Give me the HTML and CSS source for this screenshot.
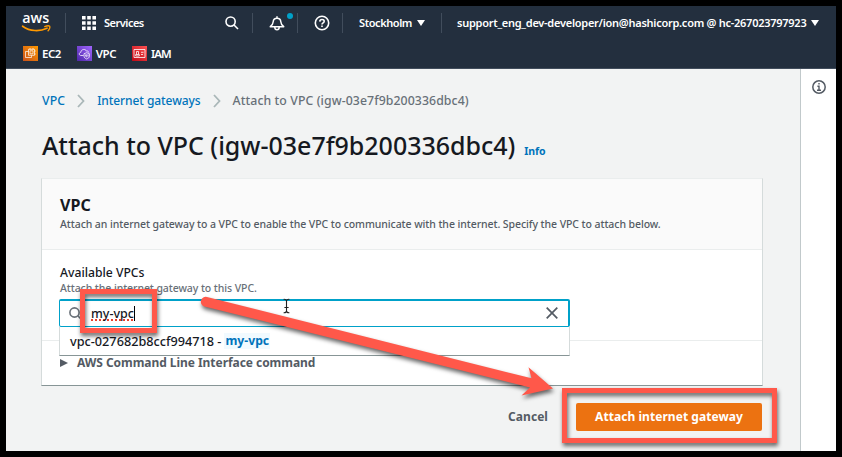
FILE: index.html
```html
<!DOCTYPE html>
<html lang="en">
<head>
<meta charset="utf-8">
<title>Attach to VPC</title>
<link rel="stylesheet" href="styles.css">
</head>
<body>
<div class="window">
  <header class="topnav">
    <div class="nav-row">
      <svg class="logo" width="30" height="20" viewBox="0 0 30 20">
        <text class="logo-text" x="0.3" y="9.3" textLength="27" lengthAdjust="spacingAndGlyphs">aws</text>
        <path d="M.6 12.2C8 17.6 18 17.6 25 14.2" fill="none" stroke="#ff9900" stroke-width="1.7" stroke-linecap="round"/>
        <path d="M22.8 12.6c2-.9 4.300-.9 4.900-.3.500.7-.2 3.100-1.600 4.500" fill="none" stroke="#ff9900" stroke-width="1.400" stroke-linecap="round"/>
      </svg>
      <i class="rule rule-logo"></i>
      <svg class="grid-icon" width="14" height="14" viewBox="0 0 14 14" fill="#fff">
        <path d="M0 0h3.600v3.600H0zM5.200 0h3.600v3.600H5.200zM10.400 0H14v3.600h-3.600zM0 5.200h3.600v3.600H0zM5.200 5.200h3.600v3.600H5.200zM10.400 5.200H14v3.600h-3.600zM0 10.400h3.600V14H0zM5.200 10.400h3.600V14H5.200zM10.400 10.400H14V14h-3.600z"/>
      </svg>
      <span class="nav-text services">Services</span>
      <svg class="nav-search" width="14" height="14" viewBox="0 0 14 14" fill="none" stroke="#fff" stroke-width="1.600">
        <circle cx="5.600" cy="5.600" r="4.600"/><path d="M9 9l4 4"/>
      </svg>
      <i class="rule rule-a"></i>
      <span class="bell">
        <svg width="16" height="15" viewBox="0 0 16 15" fill="none" stroke="#fff" stroke-width="1.500" stroke-linejoin="round">
          <path d="M8 .3v1.700M1.300 10.700h13.400c-2-1.500-2.700-2.700-2.900-5C11.600 3.400 10 2.200 8 2.200S4.400 3.400 4.200 5.700c-.2 2.300-.9 3.500-2.900 5zM5.700 11c.2 3.800 4.400 3.800 4.600 0"/>
        </svg>
        <i class="dot"></i>
      </span>
      <i class="rule rule-b"></i>
      <svg class="help" width="16" height="16" viewBox="0 0 16 16" fill="none" stroke="#fff" stroke-width="1.600">
        <circle cx="8" cy="8" r="6.700"/><path d="M5.800 6.600C5.900 3.700 10.200 4 10.200 6.300 10.200 7.900 8 7.700 8 9.500M8 10.500v1.500"/>
      </svg>
      <i class="rule rule-c"></i>
      <span class="nav-text region">Stockholm</span><i class="caret"></i>
      <i class="rule rule-d"></i>
      <span class="nav-text account">support_eng_dev-developer/ion@hashicorp.com @ hc-267023797923</span><i class="caret"></i>
    </div>
    <nav class="fav-row">
      <svg class="tile ec2" width="15" height="15" viewBox="0 0 15 15" fill="none" stroke="#fff" stroke-width=".7">
        <path d="M5.500 3.300h6v6h-6zM5.500 5.500h-3v6h6v-2.200M7 4.800h3v3H7zM7 2v1.300M10 2v1.300M12.800 5h-1.300M12.800 8h-1.300"/>
      </svg>
      <span class="fav-text">EC2</span>
      <svg class="tile vpc" width="15" height="15" viewBox="0 0 15 15" fill="none" stroke="#fff" stroke-width=".75">
        <path d="M6.500 9.500H3.800C1.700 9.300 1.800 6.500 3.900 6.300 4 3 8.600 2.500 9.400 5.100c1.500-.5 2.200.4 2.300 1.400M9.700 6.700l2.700 1v2.500c0 1.400-1.200 2.100-2.700 2.800C8.200 12.300 7 11.600 7 10.200V7.700zM9.700 8.300v3M8.400 8.500v2M11 8.500v2"/>
      </svg>
      <span class="fav-text fav-vpc">VPC</span>
      <svg class="tile iam" width="15" height="15" viewBox="0 0 15 15" fill="none" stroke="#fff" stroke-width=".8">
        <path d="M2 3.500h11v8H2zM3.700 10V8.500h3.600V10zM4.500 8.300V5.500h2v2.800M9 6.300h2.500M9 8.500h2"/>
      </svg>
      <span class="fav-text">IAM</span>
    </nav>
  </header>

  <div class="page">
    <main class="content">
      <nav class="crumbs">
        <a class="crumb-vpc">VPC</a>
        <svg class="chev" width="8" height="14" viewBox="0 0 8 14"><path d="M1 1l5.500 6L1 13"/></svg>
        <a class="crumb-igw">Internet gateways</a>
        <svg class="chev" width="8" height="14" viewBox="0 0 8 14"><path d="M1 1l5.500 6L1 13"/></svg>
        <span class="crumb-here">Attach to VPC (igw-03e7f9b200336dbc4)</span>
      </nav>
      <div class="title-row">
        <h1>Attach to VPC (igw-03e7f9b200336dbc4)</h1>
        <a class="info">Info</a>
      </div>

      <section class="panel">
        <div class="panel-head">
          <h2>VPC</h2>
          <p>Attach an internet gateway to a VPC to enable the VPC to communicate with the internet. Specify the VPC to attach below.</p>
        </div>
        <div class="panel-body">
          <div class="label">Available VPCs</div>
          <div class="hint">Attach the internet gateway to this VPC.</div>
          <div class="field">
            <svg class="field-search" width="13" height="13" viewBox="0 0 13 13" fill="none" stroke="#687078" stroke-width="1.600"><circle cx="5.500" cy="5.500" r="4.600"/><path d="M9 9l3.400 3.400"/></svg>
            <span class="typed">my-vpc</span><i class="cursor"></i>
            <svg class="clear" width="12" height="12" viewBox="0 0 12 12" stroke="#545b64" stroke-width="1.700"><path d="M.7.7l10.600 10.600M11.300.7L.7 11.300"/></svg>
            <div class="dropdown"><span class="opt">vpc-027682b8ccf994718 -</span><b>my-vpc</b></div>
          </div>
        </div>
        <div class="cli"><i class="tri"></i><span>AWS Command Line Interface command</span></div>
      </section>

      <div class="actions">
        <span class="cancel">Cancel</span>
        <span class="primary">Attach internet gateway</span>
      </div>
    </main>
    <aside class="side">
      <svg width="14" height="14" viewBox="0 0 14 14" fill="none" stroke="#545b64" stroke-width="1.500"><circle cx="7" cy="7" r="6.200"/><path d="M7 3v1.600M5.400 6.200H7v4M5 10.300h4" stroke-width="1.400"/></svg>
    </aside>
  </div>

  <svg class="marks" width="842" height="457" viewBox="0 0 842 457">
    <g fill="none" stroke="#222" stroke-width="1.100" stroke-linecap="round">
      <path d="M284 299.200q2.500 0 2.500 2v9.600q0 2-2.500 2M289 299.200q-2.500 0-2.500 2v9.600q0 2 2.500 2M284.800 307.500h3.400"/>
    </g>
    <g class="shade">
      <path class="fill" d="M207 297L531.500 378.300 528.500 367.300 553 388.500 521.500 395.500 530 387.500 204.500 306.500A4.900 4.900 0 0 1 207 297z"/>
      <rect class="frame" x="82.500" y="291.500" width="72" height="39"/>
      <rect class="frame" x="564.500" y="390.500" width="210" height="50"/>
    </g>
  </svg>
</div>
</body>
</html>
```
FILE: styles.css
```css
* { box-sizing: border-box; }
body { margin: 0; background: #000; font-family: "Noto Sans", sans-serif; font-weight: 500; color: #16191f; overflow: hidden; }
h1, h2, p { margin: 0; font-weight: 500; }
.window { position: relative; width: 842px; height: 457px; padding: 6px; display: flex; flex-direction: column; white-space: nowrap; }

.topnav { height: 63px; flex: none; background: #232f3e; border-bottom: 1px solid #414d5c; color: #fff; }
.nav-row { display: flex; align-items: center; height: 34px; padding-left: 16px; }
.logo { flex: none; margin-top: 1px; overflow: visible; }
.logo-text { font: 600 14px "Open Sans", sans-serif; fill: #fff; }
.rule { width: 1px; height: 20px; background: #414d5c; flex: none; }
.rule-logo { margin-left: 13px; }
.grid-icon { margin-left: 16px; }
.nav-text { font-size: 11px; font-weight: 600; line-height: 16px; }
.services { margin-left: 8px; width: 121px; letter-spacing: -.5px; }
.nav-search { flex: none; }
.rule-a { margin-left: 13px; }
.bell { position: relative; display: flex; margin-left: 16px; }
.dot { position: absolute; left: 18px; top: -3px; width: 6px; height: 6px; border-radius: 50%; background: #00a1c9; }
.rule-b { margin-left: 12px; }
.help { margin-left: 16px; }
.rule-c { margin-left: 12px; }
.region { margin-left: 16px; letter-spacing: -.42px; }
.caret { margin-left: 5px; border: solid transparent; border-width: 6px 4px 0; border-top-color: #fff; }
.rule-d { margin-left: 16px; }
.account { margin-left: 15px; letter-spacing: -.26px; }
.fav-row { display: flex; align-items: center; height: 28px; padding-left: 17px; }
.tile { flex: none; margin-bottom: 1px; }
.ec2 { background: linear-gradient(45deg, #c8511b, #f90); }
.vpc { background: linear-gradient(45deg, #4d27a8, #a166ff); }
.iam { background: linear-gradient(45deg, #bd0816, #ff5252); }
.fav-text { font-size: 11.5px; font-weight: 600; line-height: 16px; letter-spacing: -.5px; margin: 0 16px 0 4px; }
.fav-text:last-child { letter-spacing: -1px; }

.page { flex: 1; display: flex; min-height: 0; }
.content { width: 794px; background: #f2f3f3; padding: 22px 38px 0 35px; }
.side { flex: 1; background: #fff; border-left: 1px solid #c1c9cb; padding: 11px 0 0 11px; }
.side svg { display: block; }
.crumbs { display: flex; align-items: center; height: 18px; padding-left: 1px; font-size: 12px; color: #0073bb; }
.chev { fill: none; stroke: #aab7b8; stroke-width: 1.8px; margin: 2px 12px 0; }
.crumb-vpc { font-size: 12.3px; letter-spacing: .1px; }
.crumb-igw { letter-spacing: -.08px; }
.crumb-here { color: #687078; font-size: 12.3px; letter-spacing: .08px; }
.title-row { display: flex; align-items: baseline; margin-top: 19px; height: 50px; padding-left: 1px; }
h1 { font-size: 25px; line-height: 34px; letter-spacing: -.02px; }
.info { margin-left: 9px; font-size: 10.5px; font-weight: 700; letter-spacing: -.1px; color: #0073bb; }

.panel { width: 722px; height: 208px; background: #fff; border: 1px solid #d5dbdb; border-top-color: #eaeded; border-bottom-color: #879596; }
.panel-head { height: 71px; background: #fafafa; border-bottom: 1px solid #eaeded; padding: 16px 18px 0; }
h2 { font-size: 16px; font-weight: 700; line-height: 21px; letter-spacing: .1px; }
.panel-head p { font-size: 10.5px; line-height: 17px; letter-spacing: -.075px; color: #545b64; }
.panel-body { height: 91px; border-bottom: 1px solid #eaeded; padding: 14px 17px 0; }
.label, .hint { padding-left: 1px; }
.label { font-size: 12.2px; line-height: 17px; }
.hint { font-size: 10.5px; line-height: 15px; letter-spacing: -.08px; color: #687078; }
.field { position: relative; display: flex; align-items: center; width: 511px; height: 28px; margin-top: 3px; background: #fff; border: 1px solid #00a1c9; border-top-width: 2px; border-right-width: 2px; border-radius: 2px; }
.field-search { margin-left: 9px; flex: none; }
.typed { margin-left: 9px; font-size: 12.5px; line-height: 16px; text-decoration: underline dotted #e8432e 1.5px; text-underline-offset: 2px; text-decoration-skip-ink: none; }
.cursor { width: 1px; height: 15px; background: #000; }
.clear { margin: 0 10px 2px auto; }
.dropdown { position: absolute; left: -1px; right: -2px; top: 26px; height: 29px; padding: 0 10px 1px; display: flex; align-items: center; background: #fff; border: 1px solid #d5dbdb; border-top: 0; border-bottom-color: #879596; font-size: 12.7px; line-height: 16px; letter-spacing: 0; }
.dropdown b { margin-left: 3px; padding: 0 1px; font-size: 12.2px; color: #0073bb; background: #f1faff; }
.cli { display: flex; align-items: center; height: 43px; padding-left: 18px; font-size: 12px; font-weight: 700; letter-spacing: -.05px; color: #545b64; }
.tri { border: solid transparent; border-width: 4.5px 0 4.5px 8px; border-left-color: #545b64; margin-right: 9px; }
.actions { display: flex; align-items: center; width: 721px; justify-content: flex-end; margin-top: 17px; font-size: 12px; font-weight: 700; letter-spacing: .05px; }
.cancel { color: #545b64; margin: 0 28px 1px 0; }
.primary { width: 186px; height: 28px; line-height: 28px; text-align: center; color: #fff; background: #ec7211; border-radius: 2px; }

.marks { position: absolute; left: 0; top: 0; }
.fill { fill: #ff584a; }
.frame { fill: none; stroke: #ff584a; stroke-width: 5px; }
.shade { filter: drop-shadow(1px 3px 2px rgba(0, 0, 0, .6)); }
```
